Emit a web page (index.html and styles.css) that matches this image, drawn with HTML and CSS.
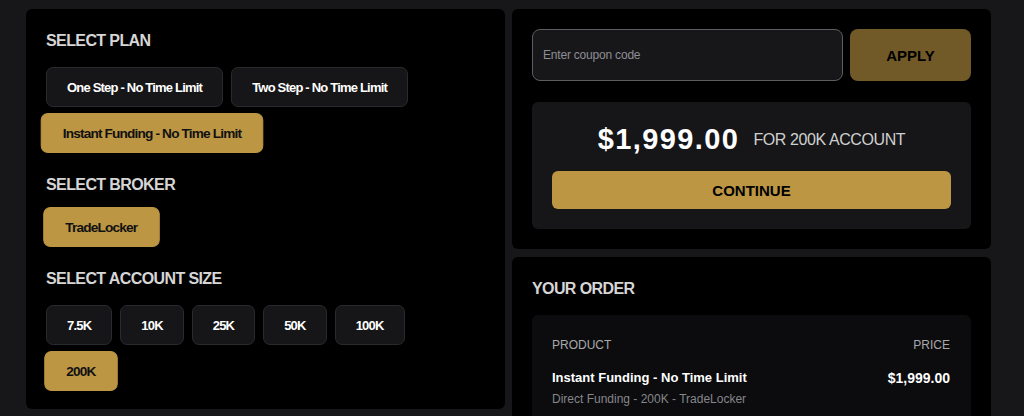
FILE: index.html
```html
<!DOCTYPE html>
<html lang="en">
<head>
    <meta charset="UTF-8">
    <meta name="viewport" content="width=device-width, initial-scale=1.0">
    <title>Checkout</title>
    <link rel="stylesheet" href="styles.css">
</head>
<body>
    <div class="checkout">
        <div class="panel options">
            <h2 class="title">Select Plan</h2>
            <div class="choices">
                <button class="choice">One Step - No Time Limit</button>
                <button class="choice">Two Step - No Time Limit</button>
                <button class="choice active">Instant Funding - No Time Limit</button>
            </div>

            <h2 class="title broker">Select Broker</h2>
            <div class="choices">
                <button class="choice active">TradeLocker</button>
            </div>

            <h2 class="title">Select Account Size</h2>
            <div class="choices">
                <button class="choice">7.5K</button>
                <button class="choice">10K</button>
                <button class="choice">25K</button>
                <button class="choice">50K</button>
                <button class="choice">100K</button>
                <button class="choice active">200K</button>
            </div>
        </div>

        <div class="side">
            <div class="panel">
                <div class="coupon">
                    <input type="text" class="coupon-input" placeholder="Enter coupon code">
                    <button class="apply">APPLY</button>
                </div>
                <div class="summary">
                    <div class="price-row">
                        <span class="price">$1,999.00</span>
                        <span class="for">FOR 200K ACCOUNT</span>
                    </div>
                    <button class="continue">CONTINUE</button>
                </div>
            </div>

            <div class="panel order">
                <h2 class="title">Your Order</h2>
                <div class="order-box">
                    <div class="order-head">
                        <span>PRODUCT</span>
                        <span>PRICE</span>
                    </div>
                    <div class="order-item">
                        <span class="item-name">Instant Funding - No Time Limit</span>
                        <span class="item-price">$1,999.00</span>
                    </div>
                    <div class="item-meta">Direct Funding - 200K - TradeLocker</div>
                </div>
            </div>
        </div>
    </div>
</body>
</html>
```

FILE: styles.css
```css
html, body {
    height: 100%;
}
body {
    margin: 0;
    background-color: #17171a;
    color: #fff;
    font-family: "Liberation Sans", Arial, sans-serif;
    overflow: hidden;
}
button, input {
    font-family: inherit;
}
.checkout {
    display: grid;
    grid-template-columns: 479px 479px;
    gap: 7px;
    padding: 9px 0 0 26px;
    align-items: start;
}
.panel {
    background-color: #000;
    border-radius: 6px;
    padding: 20px;
}
.options {
    padding-bottom: 18px;
}
.title {
    margin: 0 0 14px;
    font-size: 16px;
    line-height: 24px;
    font-weight: bold;
    text-transform: uppercase;
    letter-spacing: -0.6px;
    color: #d6d6d6;
}
.title.broker {
    margin-bottom: 10px;
}
.choices {
    display: flex;
    flex-wrap: wrap;
    gap: 6px 8px;
    max-width: 420px;
    margin-bottom: 20px;
}
.choices:last-child {
    margin-bottom: 0;
}
.choice {
    height: 40px;
    padding: 0 20px;
    background-color: #161618;
    border: 1px solid #2a2a2e;
    border-radius: 7px;
    color: #fff;
    font-size: 13px;
    font-weight: bold;
    letter-spacing: -0.8px;
    cursor: pointer;
}
.choice.active {
    background-color: #bc9643;
    border-color: #bc9643;
    color: #111;
    transform: scaleX(1.05);
}
.side {
    display: flex;
    flex-direction: column;
    gap: 8px;
}
.coupon {
    display: flex;
    gap: 7px;
}
.coupon-input {
    flex: 1;
    height: 52px;
    box-sizing: border-box;
    padding: 0 10px;
    background-color: #17171a;
    border: 1px solid #5c5c61;
    border-radius: 8px;
    color: #fff;
    font-size: 12px;
    letter-spacing: -0.2px;
}
.coupon-input::placeholder {
    color: #8e8e94;
}
.apply {
    width: 121px;
    height: 52px;
    border: none;
    border-radius: 8px;
    background-color: #bc9643;
    opacity: 0.6;
    color: #000;
    font-size: 15px;
    font-weight: bold;
}
.summary {
    margin-top: 21px;
    background-color: #161618;
    border-radius: 6px;
    padding: 20px;
}
.price-row {
    display: flex;
    justify-content: center;
    align-items: center;
    gap: 14px;
    height: 35px;
    margin-bottom: 14px;
}
.price {
    font-size: 29px;
    font-weight: bold;
    letter-spacing: 1.4px;
}
.for {
    font-size: 16px;
    letter-spacing: -0.4px;
    color: #d0d0d0;
}
.continue {
    display: block;
    width: 100%;
    height: 38px;
    border: none;
    border-radius: 6px;
    background-color: #bc9643;
    color: #000;
    font-size: 15px;
    font-weight: bold;
    cursor: pointer;
}
.order {
    padding-bottom: 40px;
}
.order-box {
    background-color: #0c0c0e;
    border-radius: 6px;
    padding: 22px 21px 30px 20px;
}
.order-head {
    display: flex;
    justify-content: space-between;
    font-size: 12px;
    line-height: 16px;
    color: #a9a9ad;
    margin-bottom: 16px;
}
.order-item {
    display: flex;
    justify-content: space-between;
    line-height: 18px;
    font-weight: bold;
}
.item-name {
    font-size: 13px;
}
.item-price {
    font-size: 14px;
}
.item-meta {
    margin-top: 4px;
    font-size: 12px;
    line-height: 16px;
    color: #86868b;
}
```
